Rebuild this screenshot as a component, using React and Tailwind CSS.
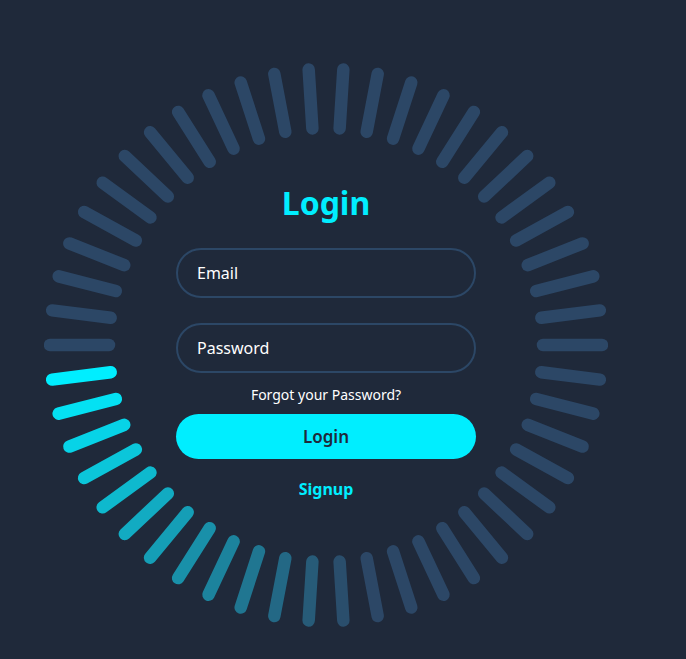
import React from "react";

const DIM = [0x2c, 0x47, 0x66];
const BRIGHT = [0x00, 0xee, 0xff];

function barColor(i) {
  const k = (24 - i + 50) % 50;
  const t = Math.min(k / 12.5, 1);
  const c = BRIGHT.map((b, j) => Math.round(b + (DIM[j] - b) * t));
  return `rgb(${c[0]},${c[1]},${c[2]})`;
}

function Ring() {
  const bars = [];
  for (let i = 0; i < 50; i++) {
    const a = (i * 7.2 * Math.PI) / 180;
    const r1 = 217;
    const r2 = 276;
    bars.push(
      <line
        key={i}
        x1={282 + r1 * Math.cos(a)}
        y1={282 + r1 * Math.sin(a)}
        x2={282 + r2 * Math.cos(a)}
        y2={282 + r2 * Math.sin(a)}
        stroke={barColor(i)}
        strokeWidth="12.5"
        strokeLinecap="round"
      />
    );
  }
  return (
    <svg className="absolute inset-0" width="564" height="564" viewBox="0 0 564 564">
      {bars}
    </svg>
  );
}

export default function App() {
  return (
    <div
      className="min-h-screen w-full bg-[#1f293a] pt-[63px] pl-[44px]"
      style={{ fontFamily: '"Noto Sans", "Open Sans", sans-serif' }}
    >
      <div className="relative w-[564px] h-[564px]">
        <Ring />
        <div className="relative flex flex-col items-center pt-[120px]">
          <h2 className="h-[40px] leading-[40px] text-[32px] font-bold text-[#00eeff]">Login</h2>
          <div className="mt-[25px] w-[300px] h-[50px] rounded-full border-2 border-[#2c4766] flex items-center px-[19px]">
            <input
              className="w-full bg-transparent outline-none text-[16px] text-white placeholder:text-white"
              placeholder="Email"
            />
          </div>
          <div className="mt-[25px] w-[300px] h-[50px] rounded-full border-2 border-[#2c4766] flex items-center px-[19px]">
            <input
              type="password"
              className="w-full bg-transparent outline-none text-[16px] text-white placeholder:text-white"
              placeholder="Password"
            />
          </div>
          <a className="mt-[12px] h-[20px] leading-[20px] text-[14px] text-white">Forgot your Password?</a>
          <button className="mt-[9px] w-[300px] h-[45px] rounded-full bg-[#00eeff] text-[17px] font-semibold text-[#1f293a]">
            Login
          </button>
          <a className="mt-[18px] h-[24px] leading-[24px] text-[16px] font-bold text-[#00eeff]">Signup</a>
        </div>
      </div>
    </div>
  );
}
